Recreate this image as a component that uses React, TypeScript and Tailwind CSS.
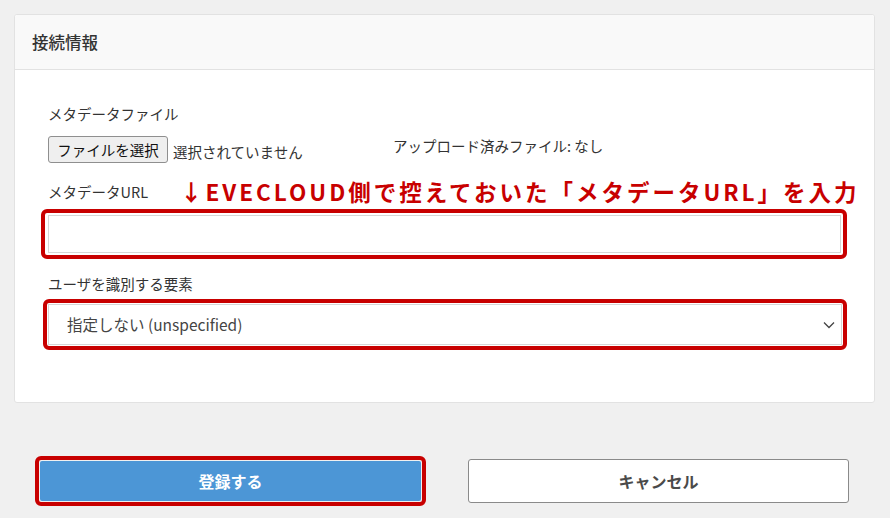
export default function App() {
  return (
    <div
      className="w-[890px] h-[518px] bg-[#f0f0f0] pt-[14px] overflow-hidden text-[#333]"
      style={{ fontFamily: '"Noto Sans CJK JP", "Noto Sans", sans-serif' }}
    >
      {/* 接続情報カード */}
      <div className="ml-[14px] w-[861px] h-[389px] bg-white border border-[#e2e2e2] rounded-[3px] overflow-hidden">
        <div className="h-[55px] bg-[#f9f9f9] border-b border-[#e2e2e2] flex items-center pl-[17px]">
          <h2 className="text-[16.5px] font-medium text-[#333]">接続情報</h2>
        </div>

        <div className="pl-[33px] pr-[34px] pt-[34px]">
          <div className="text-[14.5px] leading-[20px]">メタデータファイル</div>

          <div className="mt-[12px] flex items-center h-[27px] text-[14.5px]">
            <div className="w-[345px] flex items-center">
              <button className="h-[27px] w-[120px] border border-[#8f8f8f] rounded-[3px] bg-[#efefef] text-[14.5px] text-[#111]">
                ファイルを選択
              </button>
              <span className="ml-[5px] mt-[4px]">選択されていません</span>
            </div>
            <span className="mt-[-8px]">アップロード済みファイル: なし</span>
          </div>

          <div className="mt-[15px] flex items-center h-[28px]">
            <span className="text-[14.5px] w-[132px] shrink-0">メタデータURL</span>
            <span className="text-[22.5px] font-bold text-[#c80000] tracking-[3px] whitespace-nowrap">
              ↓EVECLOUD側で控えておいた「メタデータURL」を入力
            </span>
          </div>

          <div className="mt-[3px] -mx-[7px] border-4 border-[#c80000] rounded-[6px] p-[2px] pl-[3px]">
            <input
              type="text"
              className="block w-full h-[38px] border border-[#d6d6d6] bg-white outline-none"
            />
          </div>

          <div className="mt-[15px] text-[14.5px] leading-[20px]">ユーザを識別する要素</div>

          <div className="mt-[5px] -ml-[5px] -mr-[7px] border-4 border-[#c80000] rounded-[6px] p-[1px]">
            <div className="h-[41px] border border-[#d6d6d6] flex items-center justify-between pl-[18px] pr-[6px]">
              <span className="text-[15.5px] text-[#444]">指定しない (unspecified)</span>
              <svg width="12" height="8" viewBox="0 0 12 8" fill="none">
                <path d="M1 1.5 L6 6.5 L11 1.5" stroke="#444" strokeWidth="1.3" />
              </svg>
            </div>
          </div>
        </div>
      </div>

      {/* ボタン */}
      <div className="mt-[53px] pl-[35px] flex items-center">
        <div className="border-4 border-[#c80000] rounded-[6px] p-[1px]">
          <button className="w-[381px] h-[40px] bg-[#4c96d6] text-white text-[16px] font-bold rounded-[2px]">
            登録する
          </button>
        </div>
        <button className="ml-[42px] w-[381px] h-[44px] bg-white border border-[#8a8a8a] rounded-[3px] text-[16px] font-bold text-[#4a4a4a]">
          キャンセル
        </button>
      </div>
    </div>
  );
}
